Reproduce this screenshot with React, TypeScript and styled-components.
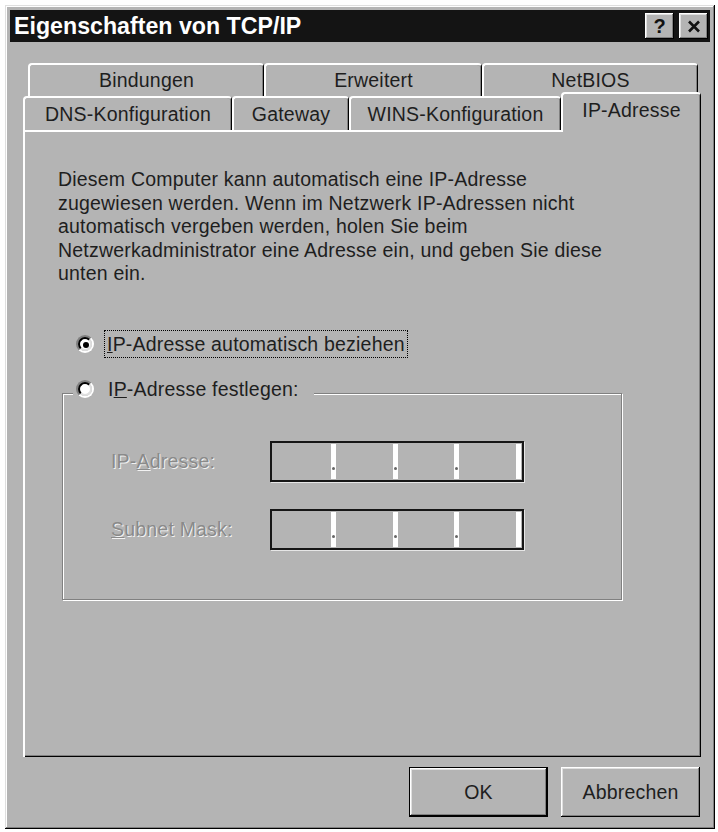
import styled, { createGlobalStyle } from 'styled-components'

const FACE = '#b4b4b4'
const INK = '#1e1e1e'

const GlobalStyle = createGlobalStyle`
  body {
    margin: 0;
    background: #fff;
    font-family: "Liberation Sans", Arial, sans-serif;
  }
`

const Window = styled.div`
  box-sizing: border-box;
  margin: 5px 0 0 5px;
  width: 710px;
  padding: 5px 5px 12px 5px;
  background: ${FACE};
  box-shadow: inset -1px -1px 0 #000, inset 1px 1px 0 #dfdfdf,
    inset -2px -2px 0 #808080, inset 2px 2px 0 #fff;
`

const TitleBar = styled.div`
  height: 32px;
  display: flex;
  align-items: center;
  background: #141414;
  padding: 0 2px 0 4px;
`

const TitleText = styled.div`
  flex: 1;
  color: #fff;
  font-weight: bold;
  font-size: 23.2px;
  line-height: 32px;
  white-space: nowrap;
`

const CaptionButton = styled.div`
  box-sizing: border-box;
  width: 29px;
  height: 26px;
  margin-left: 5px;
  display: flex;
  align-items: center;
  justify-content: center;
  background: ${FACE};
  color: #111;
  font-weight: bold;
  font-size: 20px;
  box-shadow: inset -1px -1px 0 #000, inset 1px 1px 0 #fff,
    inset -2px -2px 0 #808080, inset 2px 2px 0 #dfdfdf;
`

const Content = styled.div`
  padding: 21px 9px 0 13px;
`

const TabRow = styled.div<{ $inset?: boolean }>`
  display: flex;
  align-items: flex-end;
  height: ${p => (p.$inset ? '33px' : '34px')};
  margin: ${p => (p.$inset ? '0 3px 0 5px' : '0')};
`

const Tab = styled.div<{ $w?: number; $active?: boolean }>`
  box-sizing: border-box;
  position: relative;
  ${p => (p.$w ? `width: ${p.$w}px;` : 'flex: 1;')}
  height: ${p => (p.$active ? '40px' : '100%')};
  margin-bottom: ${p => (p.$active ? '-2px' : '0')};
  z-index: ${p => (p.$active ? 2 : 1)};
  display: flex;
  align-items: center;
  justify-content: center;
  padding-bottom: ${p => (p.$active ? '6px' : '0')};
  background: ${FACE};
  border-top: 2px solid #fff;
  border-left: 2px solid #fff;
  border-right: 1px solid #000;
  border-radius: 4px 4px 0 0;
  box-shadow: inset -1px 0 0 #808080;
  color: ${INK};
  font-size: 19.5px;
  letter-spacing: 0.2px;
  white-space: nowrap;
`

const Panel = styled.div`
  box-sizing: border-box;
  height: 627px;
  padding: 38px 0 0 35px;
  background: ${FACE};
  box-shadow: inset 2px 2px 0 #fff, inset -1px -1px 0 #000,
    inset -2px -2px 0 #808080;
  color: ${INK};
  font-size: 19.5px;
  letter-spacing: 0.2px;
`

const Intro = styled.p`
  margin: 0;
  line-height: 23.5px;
  white-space: nowrap;
`

const RadioRow = styled.div`
  display: flex;
  align-items: center;
  height: 28px;
  margin: 44px 0 0 18px;
`

const Radio = styled.span<{ $checked?: boolean }>`
  box-sizing: border-box;
  position: relative;
  flex: none;
  width: 18px;
  height: 18px;
  border-radius: 50%;
  border: 2px solid;
  border-color: #808080 #fff #fff #808080;
  &::before {
    content: '';
    position: absolute;
    inset: 0;
    border-radius: 50%;
    border: 2px solid;
    border-color: #000 #dfdfdf #dfdfdf #000;
    background: #fff;
  }
  &::after {
    content: '';
    display: ${p => (p.$checked ? 'block' : 'none')};
    position: absolute;
    left: 5px;
    top: 5px;
    width: 6px;
    height: 6px;
    border-radius: 50%;
    background: #000;
  }
`

const RadioLabel = styled.span<{ $focus?: boolean }>`
  margin-left: ${p => (p.$focus ? '10px' : '11px')};
  padding: 1px 2px;
  border: 1px dotted ${p => (p.$focus ? '#000' : 'transparent')};
  line-height: 24px;
  white-space: nowrap;
`

const Group = styled.fieldset`
  box-sizing: border-box;
  width: 560px;
  margin: 17px 0 0 4px;
  padding: 0;
  border: 1px solid #808080;
  box-shadow: inset 1px 1px 0 #fff, 1px 1px 0 #fff;
  min-inline-size: 0;
`

const GroupLegend = styled.legend`
  display: flex;
  align-items: center;
  height: 38px;
  box-sizing: border-box;
  margin-left: 10px;
  padding: 0 12px 10px 3px;
  background: ${FACE};
`

const FieldGrid = styled.div`
  display: grid;
  grid-template-columns: 159px 254px;
  row-gap: 27px;
  align-items: center;
  padding: 28px 0 49px 48px;
`

const DisabledLabel = styled.span`
  color: #8a8a8a;
  text-shadow: 1px 1px 0 #f2f2f2;
  white-space: nowrap;
`

const IpField = styled.div`
  box-sizing: border-box;
  display: flex;
  width: 254px;
  height: 41px;
  padding: 1px 1px 1px 2px;
  border: 2px solid #161616;
  box-shadow: 1px 1px 0 #e6e6e6;
  background: ${FACE};
`

const IpSegment = styled.div<{ $dot?: boolean }>`
  position: relative;
  flex: 1;
  border-right: 5px solid #fff;
  &::after {
    content: '';
    display: ${p => (p.$dot ? 'block' : 'none')};
    position: absolute;
    right: -4px;
    bottom: 9px;
    width: 3px;
    height: 3px;
    border-radius: 50%;
    background: #666;
  }
`

const ButtonRow = styled.div`
  display: flex;
  justify-content: flex-end;
  gap: 13px;
  margin-top: 10px;
  padding-right: 1px;
`

const PushButton = styled.div<{ $default?: boolean }>`
  box-sizing: border-box;
  width: 139px;
  height: 50px;
  display: flex;
  align-items: center;
  justify-content: center;
  background: ${FACE};
  color: ${INK};
  font-size: 19.5px;
  letter-spacing: 0.2px;
  border: ${p => (p.$default ? '1px solid #000' : 'none')};
  box-shadow: inset -1px -1px 0 #000, inset 1px 1px 0 #fff,
    inset -2px -2px 0 #808080, inset 2px 2px 0 #dfdfdf;
`

const CloseGlyph = () => (
  <svg width="14" height="13" viewBox="0 0 14 13">
    <path d="M2 1.5 L12 11.5 M12 1.5 L2 11.5" stroke="#111" strokeWidth="2.6" />
  </svg>
)

const Segments = () => (
  <IpField>
    <IpSegment $dot />
    <IpSegment $dot />
    <IpSegment $dot />
    <IpSegment />
  </IpField>
)

export default function App() {
  return (
    <>
      <GlobalStyle />
      <Window>
        <TitleBar>
          <TitleText>Eigenschaften von TCP/IP</TitleText>
          <CaptionButton>?</CaptionButton>
          <CaptionButton>
            <CloseGlyph />
          </CaptionButton>
        </TitleBar>
        <Content>
          <TabRow $inset>
            <Tab $w={236}>Bindungen</Tab>
            <Tab $w={218}>Erweitert</Tab>
            <Tab>NetBIOS</Tab>
          </TabRow>
          <TabRow>
            <Tab $w={209}>DNS-Konfiguration</Tab>
            <Tab $w={117}>Gateway</Tab>
            <Tab $w={212}>WINS-Konfiguration</Tab>
            <Tab $active>IP-Adresse</Tab>
          </TabRow>
          <Panel>
            <Intro>
              Diesem Computer kann automatisch eine IP-Adresse
              <br />
              zugewiesen werden. Wenn im Netzwerk IP-Adressen nicht
              <br />
              automatisch vergeben werden, holen Sie beim
              <br />
              Netzwerkadministrator eine Adresse ein, und geben Sie diese
              <br />
              unten ein.
            </Intro>
            <RadioRow>
              <Radio $checked />
              <RadioLabel $focus>
                <u>I</u>P-Adresse automatisch beziehen
              </RadioLabel>
            </RadioRow>
            <Group>
              <GroupLegend>
                <Radio />
                <RadioLabel>
                  I<u>P</u>-Adresse festlegen:
                </RadioLabel>
              </GroupLegend>
              <FieldGrid>
                <DisabledLabel>
                  IP-<u>A</u>dresse:
                </DisabledLabel>
                <Segments />
                <DisabledLabel>
                  <u>S</u>ubnet Mask:
                </DisabledLabel>
                <Segments />
              </FieldGrid>
            </Group>
          </Panel>
          <ButtonRow>
            <PushButton $default>OK</PushButton>
            <PushButton>Abbrechen</PushButton>
          </ButtonRow>
        </Content>
      </Window>
    </>
  )
}
